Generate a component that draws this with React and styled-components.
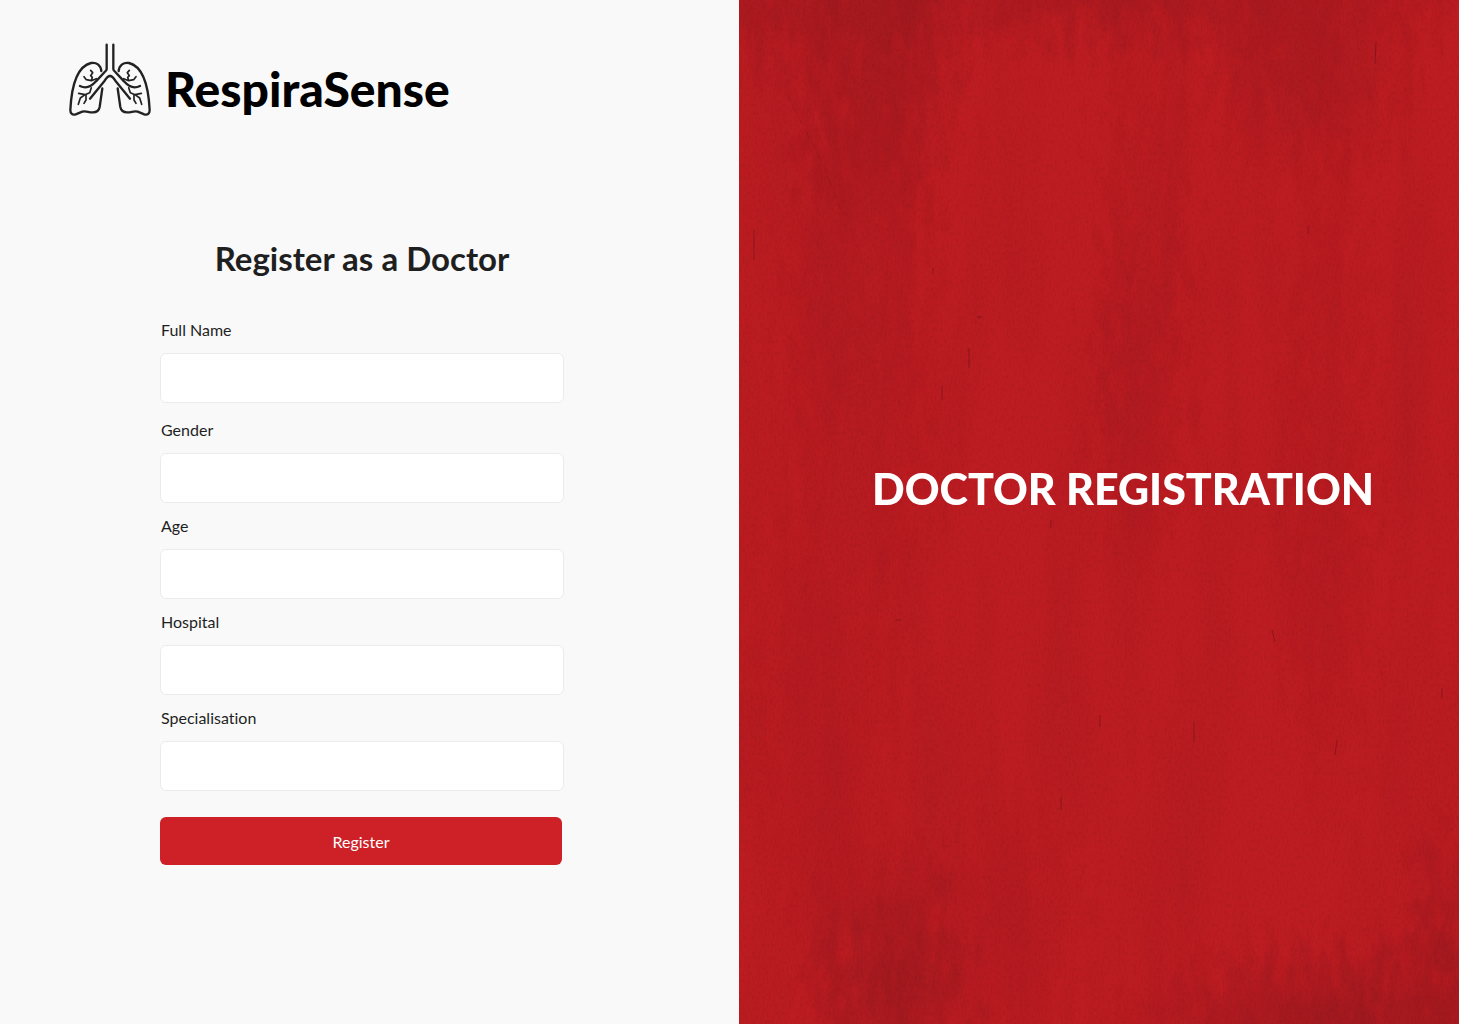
import React from "react";
import styled, { createGlobalStyle } from "styled-components";

const GlobalStyle = createGlobalStyle`
  *, *::before, *::after { box-sizing: border-box; }
  body { margin: 0; background: #f9f9f9; color: #1f1f1f; font-family: Lato, "Open Sans", sans-serif; font-variant-ligatures: none; }
`;

const Page = styled.div`
  display: grid;
  grid-template-columns: 739fr 720fr;
  min-height: 100vh;
`;

const FormSide = styled.main`
  display: flex;
  flex-direction: column;
  padding: 43px 69px;
`;

const Brand = styled.header`
  display: flex;
  align-items: center;
  gap: 14px;
`;

const LungsMark = styled.svg`
  flex: none;
  width: 82px;
  height: 74px;
  fill: none;
  stroke: #222;
  stroke-linecap: round;
  stroke-linejoin: round;
`;

const BrandName = styled.span`
  padding-top: 18px;
  color: #000;
  font-size: 48px;
  font-weight: 900;
  line-height: 56px;
`;

const Form = styled.form`
  display: flex;
  flex-direction: column;
  width: 100%;
  max-width: 404px;
  margin: 121px 0 0 91px;
`;

const Title = styled.h1`
  margin: 0 0 42px;
  font-size: 33px;
  font-weight: 700;
  line-height: 40px;
  text-align: center;
`;

const Field = styled.div`
  display: flex;
  flex-direction: column;
  gap: 13px;
  margin-bottom: ${({ $roomy }) => ($roomy ? 17 : 13)}px;
`;

const Label = styled.label`
  padding-left: 1px;
  font-size: 16px;
  line-height: 20px;
`;

const Input = styled.input`
  width: 100%;
  height: 50px;
  padding: 0 16px;
  border: 1px solid #ebebeb;
  border-radius: 6px;
  background: #fff;
  color: inherit;
  font: inherit;
`;

const SubmitButton = styled.button`
  height: 48px;
  margin: 13px 2px 0 0;
  border: 0;
  border-radius: 6px;
  background: #ce2027;
  color: #fff;
  font: inherit;
  font-size: 16px;
  cursor: pointer;
`;

const Poster = styled.aside`
  position: relative;
  display: flex;
  align-items: center;
  justify-content: center;
  padding: 0 0 46px 48px;
  overflow: hidden;
  background: #bd1d22;
`;

const Texture = styled.svg`
  position: absolute;
  inset: 0;
  width: 100%;
  height: 100%;
`;

const PosterTitle = styled.h2`
  position: relative;
  margin: 0;
  color: #fff;
  font-size: 43px;
  font-weight: 900;
  line-height: 56px;
  text-transform: uppercase;
  white-space: nowrap;
`;

const FIELDS = [
  { id: "full-name", label: "Full Name", roomy: true },
  { id: "gender", label: "Gender" },
  { id: "age", label: "Age" },
  { id: "hospital", label: "Hospital" },
  { id: "specialisation", label: "Specialisation" },
];

function LungHalf() {
  return (
    <>
      <g strokeWidth="7">
        <path d="M140 26V99C140 103 137 105 134 108L108 136C94 152 76 158 60 150" />
        <path d="M124 105C122 87 109 78 93 81C53 91 35 143 31 222C31 233 37 238 47 235L67 227C78 223 86 230 99 229C111 229 117 223 119 213L127 157" />
        <path d="M90 188L134 134C139 126 143 120 150 120" />
      </g>
      <g strokeWidth="5">
        <path d="M72 122L79 131L94 134L109 128M94 134L97 124L92 119L98 110L92 103" />
        <path d="M94 155L89 170L75 176L56 172M75 176L61 186L55 205M78 176L78 192L72 202" />
      </g>
    </>
  );
}

function Lungs() {
  return (
    <LungsMark viewBox="27 22 246 220" aria-hidden="true">
      <LungHalf />
      <g transform="translate(300 0) scale(-1 1)">
        <LungHalf />
      </g>
    </LungsMark>
  );
}

const SHADES = [
  [140, 60, 95, 200, 0.5],
  [40, 10, 190, 65, 0.35],
  [390, -5, 420, 60, 0.4],
  [570, 70, 110, 120, 0.4],
  [405, 300, 50, 300, 0.25],
  [120, 350, 80, 300, 0.25],
  [590, 480, 50, 400, 0.15],
  [80, 700, 90, 250, 0.16],
  [285, 920, 70, 130, 0.16],
  [155, 980, 100, 150, 0.6],
  [610, 1030, 240, 100, 0.65],
  [715, 960, 50, 150, 0.45],
];

const SCRATCHES = [
  "M637 42L636 64", "M455 722V742", "M361 715V727", "M322 797V810",
  "M312 520V528", "M230 348V368", "M203 385V400", "M533 630L536 642",
  "M703 688V698", "M598 740L596 755", "M569 226V234", "M238 317H243",
  "M157 620H162", "M194 268V273", "M15 230V260",
];

function Wall() {
  return (
    <Texture viewBox="0 0 720 1024" preserveAspectRatio="none" aria-hidden="true">
      <defs>
        <radialGradient id="shade">
          <stop offset="0" stopColor="#7c161d" stopOpacity="0.9" />
          <stop offset="0.5" stopColor="#7c161d" stopOpacity="0.45" />
          <stop offset="1" stopColor="#7c161d" stopOpacity="0" />
        </radialGradient>
        <filter
          id="ragged"
          filterUnits="userSpaceOnUse"
          x="-100"
          y="-100"
          width="920"
          height="1224"
          colorInterpolationFilters="sRGB"
        >
          <feTurbulence type="fractalNoise" baseFrequency="0.08 0.03" numOctaves="5" seed="5" />
          <feDisplacementMap
            in="SourceGraphic"
            scale="110"
            xChannelSelector="R"
            yChannelSelector="G"
          />
        </filter>
        <filter id="streaks" x="0" y="0" width="100%" height="100%" colorInterpolationFilters="sRGB">
          <feTurbulence type="fractalNoise" baseFrequency="0.02 0.003" numOctaves="5" seed="8" />
          <feColorMatrix values="0 0 0 0 0.49  0 0 0 0 0.09  0 0 0 0 0.12  1 0 0 0 -0.4" />
        </filter>
        <filter id="grain" x="0" y="0" width="100%" height="100%" colorInterpolationFilters="sRGB">
          <feTurbulence type="fractalNoise" baseFrequency="0.5 0.25" numOctaves="3" seed="3" />
          <feColorMatrix values="0 0 0 0 0.35  0 0 0 0 0.06  0 0 0 0 0.08  0.9 0 0 0 -0.41" />
        </filter>
      </defs>
      <g filter="url(#ragged)" opacity="0.75">
        {SHADES.map(([cx, cy, rx, ry, opacity]) => (
          <ellipse key={`${cx}-${cy}`} cx={cx} cy={cy} rx={rx} ry={ry} fill="url(#shade)" opacity={opacity} />
        ))}
      </g>
      <rect width="720" height="1024" filter="url(#streaks)" opacity="0.3" />
      <rect width="720" height="1024" filter="url(#grain)" opacity="0.35" />
      <g fill="none" stroke="#651219" strokeWidth="1">
        <g opacity="0.55">
          {SCRATCHES.map((d) => (
            <path key={d} d={d} />
          ))}
        </g>
        <path d="M48 95L62 122L84 165L102 210" opacity="0.25" strokeDasharray="7 3 12 5" />
      </g>
    </Texture>
  );
}

export default function App() {
  return (
    <>
      <GlobalStyle />
      <Page>
        <FormSide>
          <Brand>
            <Lungs />
            <BrandName>RespiraSense</BrandName>
          </Brand>
          <Form onSubmit={(event) => event.preventDefault()}>
            <Title>Register as a Doctor</Title>
            {FIELDS.map(({ id, label, roomy }) => (
              <Field key={id} $roomy={roomy}>
                <Label htmlFor={id}>{label}</Label>
                <Input id={id} name={id} type="text" />
              </Field>
            ))}
            <SubmitButton type="submit">Register</SubmitButton>
          </Form>
        </FormSide>
        <Poster>
          <Wall />
          <PosterTitle>Doctor Registration</PosterTitle>
        </Poster>
      </Page>
    </>
  );
}
